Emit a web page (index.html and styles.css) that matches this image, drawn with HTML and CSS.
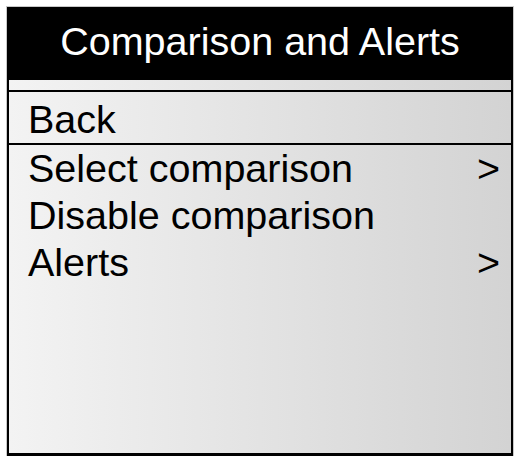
FILE: index.html
```html
<!DOCTYPE html>
<html lang="en">
<head>
  <meta charset="UTF-8">
  <title>Comparison and Alerts</title>
  <link rel="stylesheet" href="styles.css">
</head>
<body>

  <div class="panel">
    <header class="panel-title">Comparison and Alerts</header>
    <div class="spacer"></div>
    <div class="back">Back</div>

    <!-- Menu items -->
    <ul class="menu">
      <li><span>Select comparison</span><span class="more">&gt;</span></li>
      <li><span>Disable comparison</span></li>
      <li><span>Alerts</span><span class="more">&gt;</span></li>
    </ul>
  </div>

</body>
</html>
```

FILE: styles.css
```css
body {
  margin: 0;
  padding: 7px 0 0 7px;
  background: #fff;
  font-family: "Liberation Sans", Arial, sans-serif;
}
.panel {
  width: 502px;
  height: 446px;
  border: 2px solid #000;
  border-top: 0;
  border-bottom-width: 3px;
  box-shadow: 0 0 0 1px #c8c8c8;
  background: linear-gradient(to right, #f3f3f3, #d3d3d3);
  display: flex;
  flex-direction: column;
}
.panel-title {
  background: #000;
  color: #fff;
  height: 73px;
  margin: 0 -2px;
  font-size: 39.5px;
  line-height: 68px;
  text-align: center;
}
.spacer {
  height: 10px;
  border-bottom: 2px solid #000;
}
.back {
  font-size: 39.5px;
  line-height: 48px;
  padding: 3px 0 0 19px;
  border-bottom: 2px solid #000;
}
.menu {
  list-style: none;
  margin: 0;
  padding: 0;
}
.menu li {
  display: flex;
  justify-content: space-between;
  font-size: 39.5px;
  line-height: 47px;
  padding: 0 11px 0 19px;
}
```
